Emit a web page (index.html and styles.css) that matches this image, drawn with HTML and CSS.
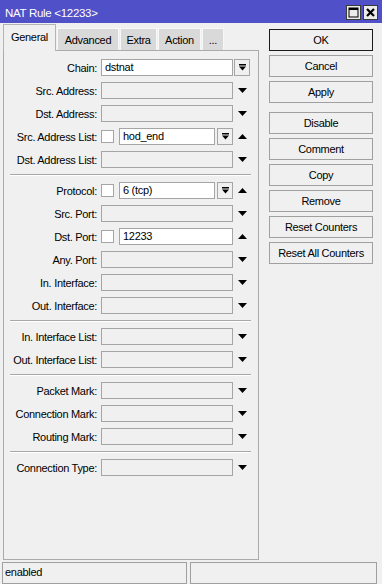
FILE: index.html
```html
<!DOCTYPE html>
<html>
<head>
<meta charset="utf-8">
<link rel="stylesheet" href="styles.css">
</head>
<body>
<div class="window">
  <div class="titlebar">
    <span class="title">NAT Rule &lt;12233&gt;</span>
    <div class="wbtns">
      <span class="wbtn"><svg width="11" height="11" viewBox="0 0 11 11"><rect x="1" y="1" width="9" height="9" fill="none" stroke="#000" stroke-width="1"/><rect x="1" y="1" width="9" height="2" fill="#000"/></svg></span>
      <span class="wbtn"><svg width="11" height="11" viewBox="0 0 11 11"><path d="M2 2 L9 9 M9 2 L2 9" stroke="#000" stroke-width="2.2" fill="none"/></svg></span>
    </div>
  </div>
  <div class="main">
    <div class="left">
      <div class="tabs">
        <div class="tab active t-general">General</div>
        <div class="tab t-advanced">Advanced</div>
        <div class="tab t-extra">Extra</div>
        <div class="tab t-action">Action</div>
        <div class="tab t-more">...</div>
      </div>
      <div class="panel">
        <div class="row"><span class="lbl">Chain:</span><div class="val"><div class="field white">dstnat</div></div><div class="side"><span class="dd"><svg width="7" height="7" viewBox="0 0 7 7"><rect x="0" y="0" width="7" height="1.5" fill="#000"/><path d="M0 2.5 H7 L3.5 6.5 Z" fill="#000"/></svg></span></div></div>
        <div class="row"><span class="lbl">Src. Address:</span><div class="val"><div class="field"></div></div><div class="side"><svg class="tri" width="9" height="5" viewBox="0 0 9 5"><path d="M0 0 H9 L4.5 5 Z"/></svg></div></div>
        <div class="row"><span class="lbl">Dst. Address:</span><div class="val"><div class="field"></div></div><div class="side"><svg class="tri" width="9" height="5" viewBox="0 0 9 5"><path d="M0 0 H9 L4.5 5 Z"/></svg></div></div>
        <div class="row"><span class="lbl">Src. Address List:</span><div class="val"><span class="chk"></span><div class="field white">hod_end</div><span class="dd in"><svg width="7" height="7" viewBox="0 0 7 7"><rect x="0" y="0" width="7" height="1.5" fill="#000"/><path d="M0 2.5 H7 L3.5 6.5 Z" fill="#000"/></svg></span></div><div class="side"><svg class="tri" width="9" height="5" viewBox="0 0 9 5"><path d="M0 5 H9 L4.5 0 Z"/></svg></div></div>
        <div class="row"><span class="lbl">Dst. Address List:</span><div class="val"><div class="field"></div></div><div class="side"><svg class="tri" width="9" height="5" viewBox="0 0 9 5"><path d="M0 0 H9 L4.5 5 Z"/></svg></div></div>
        <div class="sep"></div>
        <div class="row"><span class="lbl">Protocol:</span><div class="val"><span class="chk"></span><div class="field white">6 (tcp)</div><span class="dd in"><svg width="7" height="7" viewBox="0 0 7 7"><rect x="0" y="0" width="7" height="1.5" fill="#000"/><path d="M0 2.5 H7 L3.5 6.5 Z" fill="#000"/></svg></span></div><div class="side"><svg class="tri" width="9" height="5" viewBox="0 0 9 5"><path d="M0 5 H9 L4.5 0 Z"/></svg></div></div>
        <div class="row"><span class="lbl">Src. Port:</span><div class="val"><div class="field"></div></div><div class="side"><svg class="tri" width="9" height="5" viewBox="0 0 9 5"><path d="M0 0 H9 L4.5 5 Z"/></svg></div></div>
        <div class="row"><span class="lbl">Dst. Port:</span><div class="val"><span class="chk"></span><div class="field white">12233</div></div><div class="side"><svg class="tri" width="9" height="5" viewBox="0 0 9 5"><path d="M0 5 H9 L4.5 0 Z"/></svg></div></div>
        <div class="row"><span class="lbl">Any. Port:</span><div class="val"><div class="field"></div></div><div class="side"><svg class="tri" width="9" height="5" viewBox="0 0 9 5"><path d="M0 0 H9 L4.5 5 Z"/></svg></div></div>
        <div class="row"><span class="lbl">In. Interface:</span><div class="val"><div class="field"></div></div><div class="side"><svg class="tri" width="9" height="5" viewBox="0 0 9 5"><path d="M0 0 H9 L4.5 5 Z"/></svg></div></div>
        <div class="row"><span class="lbl">Out. Interface:</span><div class="val"><div class="field"></div></div><div class="side"><svg class="tri" width="9" height="5" viewBox="0 0 9 5"><path d="M0 0 H9 L4.5 5 Z"/></svg></div></div>
        <div class="sep"></div>
        <div class="row"><span class="lbl">In. Interface List:</span><div class="val"><div class="field"></div></div><div class="side"><svg class="tri" width="9" height="5" viewBox="0 0 9 5"><path d="M0 0 H9 L4.5 5 Z"/></svg></div></div>
        <div class="row"><span class="lbl">Out. Interface List:</span><div class="val"><div class="field"></div></div><div class="side"><svg class="tri" width="9" height="5" viewBox="0 0 9 5"><path d="M0 0 H9 L4.5 5 Z"/></svg></div></div>
        <div class="sep"></div>
        <div class="row"><span class="lbl">Packet Mark:</span><div class="val"><div class="field"></div></div><div class="side"><svg class="tri" width="9" height="5" viewBox="0 0 9 5"><path d="M0 0 H9 L4.5 5 Z"/></svg></div></div>
        <div class="row"><span class="lbl">Connection Mark:</span><div class="val"><div class="field"></div></div><div class="side"><svg class="tri" width="9" height="5" viewBox="0 0 9 5"><path d="M0 0 H9 L4.5 5 Z"/></svg></div></div>
        <div class="row"><span class="lbl">Routing Mark:</span><div class="val"><div class="field"></div></div><div class="side"><svg class="tri" width="9" height="5" viewBox="0 0 9 5"><path d="M0 0 H9 L4.5 5 Z"/></svg></div></div>
        <div class="sep"></div>
        <div class="row"><span class="lbl">Connection Type:</span><div class="val"><div class="field"></div></div><div class="side"><svg class="tri" width="9" height="5" viewBox="0 0 9 5"><path d="M0 0 H9 L4.5 5 Z"/></svg></div></div>
      </div>
    </div>
    <div class="actions">
      <div class="btn default">OK</div>
      <div class="btn">Cancel</div>
      <div class="btn">Apply</div>
      <div class="btn group">Disable</div>
      <div class="btn">Comment</div>
      <div class="btn">Copy</div>
      <div class="btn">Remove</div>
      <div class="btn">Reset Counters</div>
      <div class="btn">Reset All Counters</div>
    </div>
  </div>
  <div class="statusbar">
    <div class="sfield first">enabled</div>
    <div class="sfield second"></div>
  </div>
</div>
</body>
</html>
```
FILE: styles.css
```css
html, body {
  margin: 0;
  padding: 0;
  overflow: hidden;
}
body {
  width: 382px;
  height: 584px;
  background: #f0f0f0;
  font-family: "Liberation Sans", Arial, sans-serif;
  font-size: 11px;
  letter-spacing: -0.3px;
  color: #000;
}
.window {
  display: flex;
  flex-direction: column;
  height: 584px;
}
.titlebar {
  height: 23px;
  background: #5050c8;
  display: flex;
  align-items: center;
  justify-content: space-between;
  padding: 0 4px 0 5px;
  box-sizing: border-box;
}
.title {
  color: #fff;
  font-size: 11.5px;
  padding-top: 3px;
}
.wbtns {
  display: flex;
  gap: 2px;
  margin-top: 1px;
}
.wbtn {
  width: 15px;
  height: 15px;
  box-sizing: border-box;
  border: 1px solid #3a3a3a;
  background: #ececec;
  display: flex;
  align-items: center;
  justify-content: center;
}
.main {
  display: flex;
  height: 537px;
}
.left {
  width: 259px;
  padding-left: 3px;
  box-sizing: border-box;
}
.tabs {
  display: flex;
  align-items: flex-end;
  height: 26px;
  margin-top: 1px;
  gap: 1px;
}
.tab {
  height: 22px;
  box-sizing: border-box;
  display: flex;
  align-items: center;
  justify-content: center;
  background: #d9d9d9;
  border: 1px solid #f7f7f7;
  border-bottom: none;
}
.t-general { width: 53px; }
.t-advanced { width: 62px; }
.t-extra { width: 37px; }
.t-action { width: 43px; }
.t-more { width: 22px; }
.tab.active {
  position: relative;
  z-index: 1;
  height: 27px;
  margin-bottom: -1px;
  background: #f0f0f0;
  border: 1px solid #b4b4b4;
  border-bottom: none;
  padding-bottom: 2px;
}
.panel {
  height: 510px;
  box-sizing: border-box;
  border: 1px solid #ababab;
  padding-top: 8px;
  display: flex;
  flex-direction: column;
  gap: 6px;
}
.row {
  display: flex;
  align-items: center;
  height: 17px;
}
.lbl {
  width: 93px;
  text-align: right;
  margin-right: 4px;
  white-space: nowrap;
}
.val {
  width: 132px;
  height: 17px;
  display: flex;
  align-items: center;
}
.side {
  width: 17px;
  margin-left: 1px;
  height: 17px;
  display: flex;
  align-items: center;
  justify-content: center;
}
.field {
  flex: 1;
  height: 17px;
  box-sizing: border-box;
  border: 1px solid #a5a5a5;
  background: #f0f0f0;
  padding: 0 3px;
  line-height: 15px;
  white-space: nowrap;
}
.field.white {
  background: #fff;
}
.chk {
  width: 13px;
  height: 13px;
  box-sizing: border-box;
  border: 1px solid #a5a5a5;
  background: #fff;
  margin-right: 5px;
}
.dd {
  width: 16px;
  height: 17px;
  box-sizing: border-box;
  border: 1px solid #a5a5a5;
  background: #f0f0f0;
  display: flex;
  align-items: center;
  justify-content: center;
  margin-right: 1px;
}
.dd.in {
  margin-left: 2px;
  margin-right: 0;
}
.tri {
  fill: #000;
}
.sep {
  height: 1px;
  margin: 0 7px 0 6px;
  background: #a8a8a8;
  border-bottom: 1px solid #fff;
}
.actions {
  width: 104px;
  margin-left: 10px;
  padding-top: 6px;
  display: flex;
  flex-direction: column;
  gap: 4px;
}
.btn {
  height: 22px;
  box-sizing: border-box;
  border: 1px solid #a0a0a0;
  background: #f0f0f0;
  display: flex;
  align-items: center;
  justify-content: center;
  white-space: nowrap;
}
.btn.default {
  border-color: #1a1a1a;
}
.btn.group {
  margin-top: 5px;
}
.statusbar {
  display: flex;
  gap: 3px;
  padding: 0 5px 0 2px;
  margin-top: 2px;
  height: 22px;
}
.sfield {
  height: 22px;
  box-sizing: border-box;
  border: 1px solid #a0a0a0;
  padding: 2px 0 0 2px;
  line-height: 15px;
}
.sfield.first {
  width: 185px;
}
.sfield.second {
  flex: 1;
}
```
